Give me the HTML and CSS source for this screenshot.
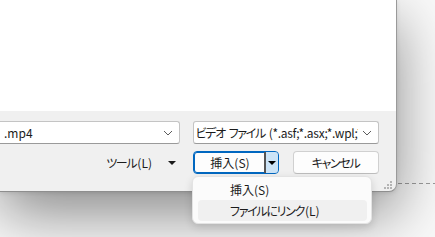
FILE: index.html
```html
<!DOCTYPE html>
<html lang="ja">
<head>
<meta charset="utf-8">
<link rel="stylesheet" href="styles.css">
</head>
<body>
<div class="stage">
  <div class="dash"></div>
  <div class="window">
    <div class="content"></div>
    <div class="footer">
      <div class="row">
        <div class="combo combo-name"><span class="ctext">.mp4</span><svg class="chev" width="10" height="6" viewBox="0 0 10 6"><path d="M1 1l4 4 4-4" fill="none" stroke="#5c5c5c" stroke-width="1"/></svg></div>
        <div class="combo combo-type"><span class="ctext"><span class="kana">ビデオ</span> <span class="kana">ファイル</span> <span class="lat">(*.asf;*.asx;*.wpl;*.wm;*.wmx;*.wmd;*.wmz)</span></span><svg class="chev" width="10" height="6" viewBox="0 0 10 6"><path d="M1 1l4 4 4-4" fill="none" stroke="#5c5c5c" stroke-width="1"/></svg></div>
      </div>
      <div class="row row2">
        <div class="tools"><span><span class="kana">ツール</span>(L)</span><span class="tri"></span></div>
        <div class="btn split"><span class="blabel">挿入(S)</span><span class="sarrow"><span class="tri dark"></span></span></div>
        <div class="btn"><span class="blabel kana">キャンセル</span></div>
      </div>
      <div class="grip"><i></i><i></i><i></i><i></i><i></i><i></i></div>
    </div>
  </div>
  <div class="menu">
    <div class="item">挿入(S)</div>
    <div class="item hover"><span class="kana">ファイルにリンク</span>(L)</div>
  </div>
</div>
</body>
</html>
```
FILE: styles.css
```css
html, body { margin: 0; padding: 0; }
body {
  width: 435px;
  height: 237px;
  overflow: hidden;
  background: #f8f8f8;
  font-family: "Noto Sans CJK JP", "Noto Sans", sans-serif;
  font-size: 12px;
  color: #1b1b1b;
  font-feature-settings: "palt";
}
.kana { letter-spacing: -1.3px; margin-right: 1px; }
.lat { letter-spacing: -0.3px; }
.stage {
  position: relative;
  width: 435px;
  height: 237px;
  overflow: hidden;
  background: #f9f9f9;
}
.dash {
  position: absolute;
  left: 398px;
  top: 183px;
  width: 40px;
  height: 1px;
  background: repeating-linear-gradient(to right, #9c9c9c 0 4px, transparent 4px 7px);
}
.window {
  position: relative;
  width: 396px;
  height: 191px;
  display: flex;
  flex-direction: column;
  border-right: 1px solid #9a9a9a;
  border-bottom: 1px solid #8e8e8e;
  border-bottom-right-radius: 8px;
  background: #f0f0f0;
  box-shadow: 0 22px 60px rgba(0,0,0,0.45), 0 1px 4px rgba(0,0,0,0.1);
  overflow: hidden;
}
.content {
  height: 111px;
  background: #ffffff;
  flex: none;
}
.footer {
  position: relative;
  flex: 1;
  padding: 10px 17px 0 0;
  display: flex;
  flex-direction: column;
  gap: 7px;
}
.row {
  display: flex;
  align-items: center;
  gap: 13px;
}
.combo {
  box-sizing: border-box;
  height: 23px;
  background: #fff;
  border: 1px solid #c4c4c4;
  border-bottom-color: #9a9a9a;
  border-radius: 3px;
  display: flex;
  align-items: center;
  padding: 0 6px 0 3px;
  overflow: hidden;
}
.combo-name {
  width: 200px;
  margin-left: -20px;
  padding-left: 23px;
}
.combo-type {
  width: 187px;
  padding-left: 2px;
}
.ctext {
  flex: 1;
  white-space: nowrap;
  overflow: hidden;
  line-height: 21px;
}
.chev { flex: none; margin-left: 4px; }
.row2 { gap: 14px; justify-content: flex-end; }
.tools {
  display: flex;
  align-items: center;
  gap: 16px;
  margin-right: 3px;
}
.tri {
  display: inline-block;
  width: 0;
  height: 0;
  border-left: 4px solid transparent;
  border-right: 4px solid transparent;
  border-top: 4px solid #1b1b1b;
}
.tri.dark { border-top-color: #000; }
.btn {
  box-sizing: border-box;
  width: 86px;
  height: 23px;
  background: #fdfdfd;
  border: 1px solid #d0d0d0;
  border-bottom-color: #bdbdbd;
  border-radius: 4px;
  display: flex;
  align-items: center;
  justify-content: center;
}
.btn.split {
  border: 1px solid #0067c0;
  box-shadow: inset 0 0 0 1px #0067c0;
  justify-content: flex-start;
  overflow: hidden;
}
.split .blabel {
  flex: 1;
  text-align: center;
  padding-left: 2px;
}
.sarrow {
  align-self: stretch;
  width: 12px;
  border-left: 2px solid #555;
  background: #cce4f7;
  display: flex;
  align-items: center;
  justify-content: center;
}
.grip {
  position: absolute;
  right: 4px;
  bottom: 1px;
  width: 9px;
  height: 9px;
}
.grip i {
  position: absolute;
  width: 2px;
  height: 2px;
  background: #b4b4b4;
}
.grip i:nth-child(1) { right: 0; top: 0; }
.grip i:nth-child(2) { right: 0; top: 3px; }
.grip i:nth-child(3) { right: 3px; top: 3px; }
.grip i:nth-child(4) { right: 0; top: 6px; }
.grip i:nth-child(5) { right: 3px; top: 6px; }
.grip i:nth-child(6) { right: 6px; top: 6px; }
.menu {
  position: absolute;
  left: 192px;
  top: 176px;
  box-sizing: border-box;
  width: 180px;
  height: 48px;
  background: #fbfbfb;
  border: 1px solid #e3e3e3;
  border-radius: 6px;
  box-shadow: 0 3px 8px rgba(0,0,0,0.14);
  padding: 2px 4px 2px 5px;
  display: flex;
  flex-direction: column;
}
.item {
  height: 21px;
  line-height: 21px;
  padding-left: 32px;
  border-radius: 4px;
  white-space: nowrap;
}
.item.hover { background: #f0f0f0; }
```
